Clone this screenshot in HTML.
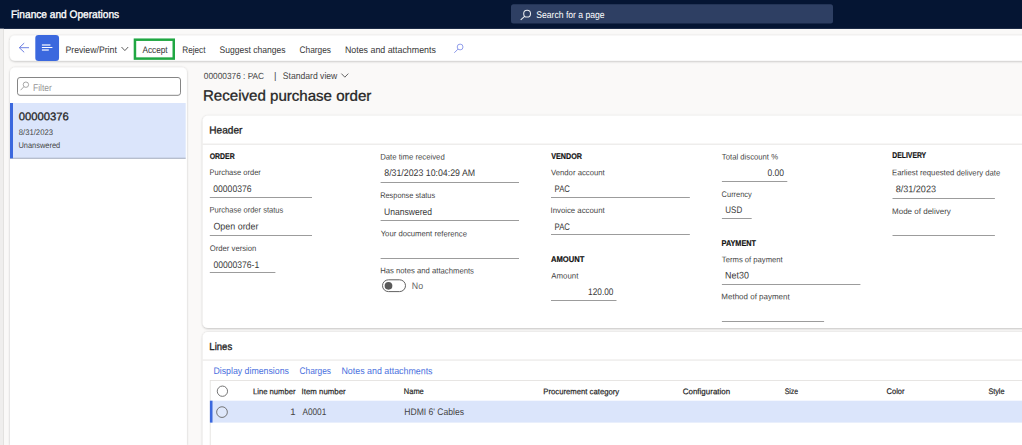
<!DOCTYPE html>
<html><head><meta charset="utf-8">
<style>
*{box-sizing:border-box;margin:0;padding:0}
html,body{width:1022px;height:445px;overflow:hidden;background:#faf9f8}
svg{position:absolute;left:0;top:0;font-family:"Liberation Sans",sans-serif}
.u{stroke:#9c9c9c;stroke-width:1}
</style></head><body>
<svg width="1022" height="445" viewBox="0 0 1022 445">
<defs>
<filter id="sh" x="-5%" y="-20%" width="110%" height="140%"><feDropShadow dx="0" dy="0.6" stdDeviation="0.9" flood-color="#000" flood-opacity="0.28"/></filter>
<filter id="sh2" x="-5%" y="-5%" width="110%" height="110%"><feDropShadow dx="0" dy="0.3" stdDeviation="0.8" flood-color="#000" flood-opacity="0.22"/></filter>
</defs>
<rect x="0" y="0" width="1022" height="445" fill="#faf9f8"/>
<rect x="0" y="0" width="1022" height="28.9" fill="#051533"/>
<rect x="0" y="28.7" width="3.6" height="417" fill="#efeeed"/>
<rect x="3.4" y="28.7" width="0.5" height="417" fill="#d2d0ce"/>
<rect x="511" y="4.3" width="322" height="19.2" rx="2.5" fill="#2e3f63"/>
<g fill="none" stroke="#fff" stroke-opacity=".9"><circle cx="527.1" cy="13.7" r="3.4" stroke-width="1.05"/><path d="M524.6 16.3 L520.7 19.9" stroke-width="1.1"/></g>

<rect x="9.9" y="35.4" width="1030" height="25.4" rx="5" fill="#fff" filter="url(#sh)"/>
<path d="M24.2 43.1 L19.3 47.7 L24.2 52.3 M19.3 47.7 H29" fill="none" stroke="#6e80e2" stroke-width="1"/>
<rect x="35.3" y="34.9" width="23.75" height="26" rx="3.2" fill="#3b68de"/>
<path d="M41.9 44.9 H50.4 M41.9 50.1 H48.8" fill="none" stroke="#fff" stroke-opacity=".8" stroke-width="1.5"/><path d="M41.9 47.5 H52.4" fill="none" stroke="#fff" stroke-width="1.05"/>
<path d="M121.5 47 L124.85 50.6 L128.2 47" fill="none" stroke="#555" stroke-width="0.95"/>
<rect x="134.95" y="39.7" width="38.8" height="18.9" fill="none" stroke="#20a742" stroke-width="2.5"/>
<g fill="none" stroke="#8492e8"><circle cx="460.1" cy="47" r="2.9" stroke-width="0.9"/><path d="M458 49.1 L454.3 52.8" stroke-width="0.95"/></g>

<path d="M10 445 V72.6 a5 5 0 0 1 5 -5 H181.9 a5 5 0 0 1 5 5 V445 Z" fill="#fff" filter="url(#sh2)"/>
<rect x="17.5" y="77.5" width="163" height="17.8" rx="2.5" fill="#fff" stroke="#858585" stroke-width="1"/>
<g fill="none" stroke="#979797"><circle cx="25.9" cy="84.7" r="2.7" stroke-width="0.85"/><path d="M23.9 86.7 L20.6 90.2" stroke-width="0.85"/></g>
<rect x="10" y="103" width="175.7" height="55.3" fill="#dbe5fb"/>
<rect x="10" y="157.8" width="175.7" height="0.8" fill="#8f99ad"/>
<rect x="10" y="103" width="3" height="55.3" fill="#3b68de"/>

<path d="M341.4 73.6 L344.85 77.2 L348.3 73.6" fill="none" stroke="#555" stroke-width="0.9"/>

<!-- Header card -->
<rect x="202.7" y="115.8" width="840" height="212.2" rx="5" fill="#fff" filter="url(#sh)"/>
<rect x="202.7" y="143.7" width="820" height="0.9" fill="#e3e1df"/>
<g class="u">
<path d="M209.8 197.5 H312"/><path d="M209.8 235.5 H312"/><path d="M209.8 272.5 H275.4"/><path d="M380.6 182.5 H519.0"/><path d="M380.6 220.5 H519.0"/><path d="M380.6 258.5 H519.0"/><path d="M551 197.5 H689.85"/><path d="M551 234.5 H689.85"/><path d="M551 300.5 H616.5"/><path d="M721.9 181.5 H787.3"/><path d="M721.9 218.5 H751.7"/><path d="M721.9 284.5 H860.4"/><path d="M721.9 321.5 H824.1"/><path d="M892.5 198.5 H994.9"/><path d="M892.5 235.5 H994.9"/>
</g>
<rect x="382.5" y="279.8" width="23" height="11.8" rx="5.9" fill="#fff" stroke="#626262" stroke-width="1"/>
<circle cx="388.5" cy="285.8" r="3.85" fill="#5a5a5a"/>

<!-- Lines card -->
<rect x="202.7" y="332" width="840" height="140" rx="5" fill="#fff" filter="url(#sh)"/>
<rect x="202.7" y="359.6" width="820" height="0.9" fill="#e3e1df"/>
<rect x="210" y="380" width="830" height="0.8" fill="#e1dfdd"/>
<rect x="209.8" y="380" width="0.8" height="70" fill="#e1dfdd"/>
<rect x="210" y="400.7" width="820" height="21.9" fill="#dbe5fb"/>
<rect x="209.9" y="400.7" width="2.6" height="21.9" fill="#3b68de"/>
<circle cx="222.4" cy="391.2" r="5.15" fill="#fff" stroke="#666" stroke-width="0.9"/>
<circle cx="222" cy="412.1" r="5.35" fill="#dfe8fb" stroke="#666" stroke-width="0.9"/>
<text x="10.90" y="17.60" transform="rotate(.03 10.9 17.6)" font-size="11.0" fill="#fff" textLength="108.31" lengthAdjust="spacingAndGlyphs" stroke="#fff" stroke-width="0.35">Finance and Operations</text>
<text x="536.32" y="17.85" transform="rotate(.03 536.3 17.9)" font-size="9.7" fill="#fff" textLength="68.25" lengthAdjust="spacingAndGlyphs">Search for a page</text>
<text x="65.44" y="52.60" transform="rotate(.03 65.4 52.6)" font-size="9.5" fill="#383838" textLength="51.38" lengthAdjust="spacingAndGlyphs">Preview/Print</text>
<text x="142.38" y="52.60" transform="rotate(.03 142.4 52.6)" font-size="9.5" fill="#383838" textLength="25.29" lengthAdjust="spacingAndGlyphs">Accept</text>
<text x="182.26" y="52.60" transform="rotate(.03 182.3 52.6)" font-size="9.5" fill="#383838" textLength="23.26" lengthAdjust="spacingAndGlyphs">Reject</text>
<text x="219.48" y="52.60" transform="rotate(.03 219.5 52.6)" font-size="9.5" fill="#383838" textLength="66.08" lengthAdjust="spacingAndGlyphs">Suggest changes</text>
<text x="299.49" y="52.60" transform="rotate(.03 299.5 52.6)" font-size="9.5" fill="#383838" textLength="31.57" lengthAdjust="spacingAndGlyphs">Charges</text>
<text x="344.93" y="52.60" transform="rotate(.03 344.9 52.6)" font-size="9.5" fill="#383838" textLength="90.94" lengthAdjust="spacingAndGlyphs">Notes and attachments</text>
<text x="32.95" y="90.60" transform="rotate(.03 33.0 90.6)" font-size="9.7" fill="#969696" textLength="18.88" lengthAdjust="spacingAndGlyphs">Filter</text>
<text x="18.79" y="120.35" transform="rotate(.03 18.8 120.3)" font-size="11.1" fill="#262626" textLength="50.02" lengthAdjust="spacingAndGlyphs" stroke="#262626" stroke-width="0.3">00000376</text>
<text x="18.72" y="135.10" transform="rotate(.03 18.7 135.1)" font-size="8.2" fill="#454545" textLength="34.27" lengthAdjust="spacingAndGlyphs">8/31/2023</text>
<text x="18.46" y="147.60" transform="rotate(.03 18.5 147.6)" font-size="8.2" fill="#454545" textLength="41.77" lengthAdjust="spacingAndGlyphs">Unanswered</text>
<text x="203.82" y="79.10" transform="rotate(.03 203.8 79.1)" font-size="8.9" fill="#454545" textLength="60.31" lengthAdjust="spacingAndGlyphs">00000376 : PAC</text>
<text x="274.08" y="79.10" transform="rotate(.03 274.1 79.1)" font-size="9.5" fill="#454545">|</text>
<text x="282.79" y="79.10" transform="rotate(.03 282.8 79.1)" font-size="9.5" fill="#454545" textLength="54.53" lengthAdjust="spacingAndGlyphs">Standard view</text>
<text x="202.97" y="100.60" transform="rotate(.03 203.0 100.6)" font-size="14.8" fill="#262626" textLength="168.42" lengthAdjust="spacingAndGlyphs" stroke="#262626" stroke-width="0.3">Received purchase order</text>
<text x="209.35" y="133.60" transform="rotate(.03 209.4 133.6)" font-size="10.3" fill="#222" textLength="33.02" lengthAdjust="spacingAndGlyphs" stroke="#222" stroke-width="0.32">Header</text>
<text x="209.71" y="158.60" transform="rotate(.03 209.7 158.6)" font-size="8.2" font-weight="bold" fill="#111" textLength="24.98" lengthAdjust="spacingAndGlyphs" stroke="#111" stroke-width=".18">ORDER</text>
<text x="209.47" y="175.35" transform="rotate(.03 209.5 175.3)" font-size="8.1" fill="#454545" textLength="51.36" lengthAdjust="spacingAndGlyphs">Purchase order</text>
<text x="213.29" y="191.60" transform="rotate(.03 213.3 191.6)" font-size="9.5" fill="#383838" textLength="38.22" lengthAdjust="spacingAndGlyphs">00000376</text>
<text x="209.47" y="212.60" transform="rotate(.03 209.5 212.6)" font-size="8.1" fill="#454545" textLength="73.86" lengthAdjust="spacingAndGlyphs">Purchase order status</text>
<text x="213.44" y="229.60" transform="rotate(.03 213.4 229.6)" font-size="9.5" fill="#383838" textLength="45.02" lengthAdjust="spacingAndGlyphs">Open order</text>
<text x="209.72" y="251.10" transform="rotate(.03 209.7 251.1)" font-size="8.1" fill="#454545" textLength="46.66" lengthAdjust="spacingAndGlyphs">Order version</text>
<text x="213.44" y="267.60" transform="rotate(.03 213.4 267.6)" font-size="9.5" fill="#383838" textLength="45.78" lengthAdjust="spacingAndGlyphs">00000376-1</text>
<text x="380.17" y="159.60" transform="rotate(.03 380.2 159.6)" font-size="8.1" fill="#454545" textLength="64.57" lengthAdjust="spacingAndGlyphs">Date time received</text>
<text x="384.28" y="176.35" transform="rotate(.03 384.3 176.3)" font-size="9.5" fill="#383838" textLength="90.83" lengthAdjust="spacingAndGlyphs">8/31/2023 10:04:29 AM</text>
<text x="380.17" y="197.85" transform="rotate(.03 380.2 197.8)" font-size="8.1" fill="#454545" textLength="54.96" lengthAdjust="spacingAndGlyphs">Response status</text>
<text x="384.04" y="214.60" transform="rotate(.03 384.0 214.6)" font-size="9.5" fill="#383838" textLength="47.98" lengthAdjust="spacingAndGlyphs">Unanswered</text>
<text x="380.67" y="236.35" transform="rotate(.03 380.7 236.3)" font-size="8.1" fill="#454545" textLength="86.31" lengthAdjust="spacingAndGlyphs">Your document reference</text>
<text x="380.17" y="273.35" transform="rotate(.03 380.2 273.4)" font-size="8.1" fill="#454545" textLength="93.82" lengthAdjust="spacingAndGlyphs">Has notes and attachments</text>
<text x="411.80" y="289.35" transform="rotate(.03 411.8 289.4)" font-size="9.5" fill="#666" textLength="11.25" lengthAdjust="spacingAndGlyphs">No</text>
<text x="551.26" y="158.60" transform="rotate(.03 551.3 158.6)" font-size="8.2" font-weight="bold" fill="#111" textLength="30.78" lengthAdjust="spacingAndGlyphs" stroke="#111" stroke-width=".18">VENDOR</text>
<text x="551.02" y="175.35" transform="rotate(.03 551.0 175.3)" font-size="8.1" fill="#454545" textLength="53.67" lengthAdjust="spacingAndGlyphs">Vendor account</text>
<text x="554.56" y="191.60" transform="rotate(.03 554.6 191.6)" font-size="9.5" fill="#383838" textLength="15.34" lengthAdjust="spacingAndGlyphs">PAC</text>
<text x="550.52" y="213.10" transform="rotate(.03 550.5 213.1)" font-size="8.1" fill="#454545" textLength="54.16" lengthAdjust="spacingAndGlyphs">Invoice account</text>
<text x="554.56" y="229.85" transform="rotate(.03 554.6 229.8)" font-size="9.5" fill="#383838" textLength="15.34" lengthAdjust="spacingAndGlyphs">PAC</text>
<text x="551.02" y="261.60" transform="rotate(.03 551.0 261.6)" font-size="8.2" font-weight="bold" fill="#111" textLength="33.42" lengthAdjust="spacingAndGlyphs" stroke="#111" stroke-width=".18">AMOUNT</text>
<text x="551.27" y="278.60" transform="rotate(.03 551.3 278.6)" font-size="8.1" fill="#454545" textLength="27.11" lengthAdjust="spacingAndGlyphs">Amount</text>
<text x="588.10" y="295.35" transform="rotate(.03 588.1 295.4)" font-size="9.5" fill="#383838" textLength="25.32" lengthAdjust="spacingAndGlyphs">120.00</text>
<text x="721.86" y="159.60" transform="rotate(.03 721.9 159.6)" font-size="8.1" fill="#454545" textLength="56.12" lengthAdjust="spacingAndGlyphs">Total discount %</text>
<text x="767.50" y="176.10" transform="rotate(.03 767.5 176.1)" font-size="9.5" fill="#383838" textLength="16.56" lengthAdjust="spacingAndGlyphs">0.00</text>
<text x="721.62" y="196.85" transform="rotate(.03 721.6 196.8)" font-size="8.1" fill="#454545" textLength="30.21" lengthAdjust="spacingAndGlyphs">Currency</text>
<text x="725.36" y="212.60" transform="rotate(.03 725.4 212.6)" font-size="9.5" fill="#383838" textLength="16.80" lengthAdjust="spacingAndGlyphs">USD</text>
<text x="721.62" y="245.85" transform="rotate(.03 721.6 245.8)" font-size="8.2" font-weight="bold" fill="#111" textLength="34.32" lengthAdjust="spacingAndGlyphs" stroke="#111" stroke-width=".18">PAYMENT</text>
<text x="721.87" y="262.35" transform="rotate(.03 721.9 262.4)" font-size="8.1" fill="#454545" textLength="60.87" lengthAdjust="spacingAndGlyphs">Terms of payment</text>
<text x="725.09" y="278.60" transform="rotate(.03 725.1 278.6)" font-size="9.5" fill="#383838" textLength="23.78" lengthAdjust="spacingAndGlyphs">Net30</text>
<text x="721.37" y="299.35" transform="rotate(.03 721.4 299.4)" font-size="8.1" fill="#454545" textLength="68.37" lengthAdjust="spacingAndGlyphs">Method of payment</text>
<text x="892.27" y="158.35" transform="rotate(.03 892.3 158.3)" font-size="8.2" font-weight="bold" fill="#111" textLength="33.92" lengthAdjust="spacingAndGlyphs" stroke="#111" stroke-width=".18">DELIVERY</text>
<text x="892.02" y="175.35" transform="rotate(.03 892.0 175.3)" font-size="8.1" fill="#454545" textLength="108.27" lengthAdjust="spacingAndGlyphs">Earliest requested delivery date</text>
<text x="895.64" y="192.35" transform="rotate(.03 895.6 192.3)" font-size="9.5" fill="#383838" textLength="40.37" lengthAdjust="spacingAndGlyphs">8/31/2023</text>
<text x="892.02" y="214.10" transform="rotate(.03 892.0 214.1)" font-size="8.1" fill="#454545" textLength="58.81" lengthAdjust="spacingAndGlyphs">Mode of delivery</text>
<text x="209.36" y="349.60" transform="rotate(.03 209.4 349.6)" font-size="10.3" fill="#222" textLength="22.85" lengthAdjust="spacingAndGlyphs" stroke="#222" stroke-width="0.32">Lines</text>
<text x="213.44" y="374.10" transform="rotate(.03 213.4 374.1)" font-size="9.5" fill="#4a70de" textLength="75.48" lengthAdjust="spacingAndGlyphs">Display dimensions</text>
<text x="299.49" y="374.10" transform="rotate(.03 299.5 374.1)" font-size="9.5" fill="#4a70de" textLength="31.57" lengthAdjust="spacingAndGlyphs">Charges</text>
<text x="341.43" y="374.10" transform="rotate(.03 341.4 374.1)" font-size="9.5" fill="#4a70de" textLength="91.13" lengthAdjust="spacingAndGlyphs">Notes and attachments</text>
<text x="252.93" y="394.35" transform="rotate(.03 252.9 394.4)" font-size="8.1" fill="#1f1f1f" textLength="42.61" lengthAdjust="spacingAndGlyphs" stroke="#1f1f1f" stroke-width=".2">Line number</text>
<text x="301.53" y="394.35" transform="rotate(.03 301.5 394.4)" font-size="8.1" fill="#1f1f1f" textLength="44.21" lengthAdjust="spacingAndGlyphs" stroke="#1f1f1f" stroke-width=".2">Item number</text>
<text x="403.83" y="394.35" transform="rotate(.03 403.8 394.4)" font-size="8.1" fill="#1f1f1f" textLength="19.96" lengthAdjust="spacingAndGlyphs" stroke="#1f1f1f" stroke-width=".2">Name</text>
<text x="543.27" y="394.35" transform="rotate(.03 543.3 394.4)" font-size="8.1" fill="#1f1f1f" textLength="75.97" lengthAdjust="spacingAndGlyphs" stroke="#1f1f1f" stroke-width=".2">Procurement category</text>
<text x="682.72" y="394.35" transform="rotate(.03 682.7 394.4)" font-size="8.1" fill="#1f1f1f" textLength="47.51" lengthAdjust="spacingAndGlyphs" stroke="#1f1f1f" stroke-width=".2">Configuration</text>
<text x="784.72" y="394.35" transform="rotate(.03 784.7 394.4)" font-size="8.1" fill="#1f1f1f" textLength="13.39" lengthAdjust="spacingAndGlyphs" stroke="#1f1f1f" stroke-width=".2">Size</text>
<text x="886.58" y="394.35" transform="rotate(.03 886.6 394.4)" font-size="8.1" fill="#1f1f1f" textLength="17.85" lengthAdjust="spacingAndGlyphs" stroke="#1f1f1f" stroke-width=".2">Color</text>
<text x="988.38" y="394.35" transform="rotate(.03 988.4 394.4)" font-size="8.1" fill="#1f1f1f" textLength="16.14" lengthAdjust="spacingAndGlyphs" stroke="#1f1f1f" stroke-width=".2">Style</text>
<text x="290.23" y="415.10" transform="rotate(.03 290.2 415.1)" font-size="9.5" fill="#444">1</text>
<text x="302.38" y="415.10" transform="rotate(.03 302.4 415.1)" font-size="9.5" fill="#444" textLength="23.97" lengthAdjust="spacingAndGlyphs">A0001</text>
<text x="404.24" y="415.10" transform="rotate(.03 404.2 415.1)" font-size="9.5" fill="#444" textLength="59.83" lengthAdjust="spacingAndGlyphs">HDMI 6' Cables</text>
</svg>
</body></html>
